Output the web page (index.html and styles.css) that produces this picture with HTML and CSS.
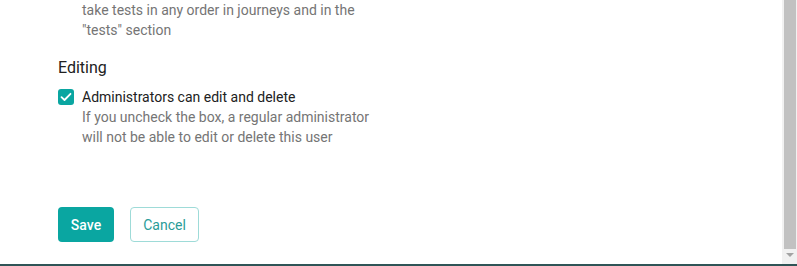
FILE: index.html
```html
<!DOCTYPE html>
<html lang="en">

<head>
    <meta charset="UTF-8">
    <meta name="viewport" content="width=device-width, initial-scale=1.0">

    <title>User settings</title>
    <link rel="stylesheet" href="styles.css">
</head>

<body>
    <main class="form">

        <div class="option">
            <p class="hint">take tests in any order in journeys and in the<br>"tests" section</p>
        </div>

        <section class="group">
            <h3 class="group-title">Editing</h3>

            <label class="check">
                <span class="box">
                    <svg width="12" height="10" viewBox="0 0 12 10">
                        <path d="M1.5 5.2 L4.5 8 L10.5 1.8" fill="none" stroke="#fff" stroke-width="1.8" stroke-linecap="round" stroke-linejoin="round" />
                    </svg>
                </span>
                <span class="check-text">
                    <span class="label">Administrators can edit and delete</span>
                    <span class="hint">If you uncheck the box, a regular administrator<br>will not be able to edit or delete this user</span>
                </span>
            </label>
        </section>

        <div class="actions">
            <button class="btn btn-save">Save</button>
            <button class="btn btn-cancel">Cancel</button>
        </div>

    </main>

    <div class="scrollbar">
        <div class="thumb"></div>
        <div class="arrow"></div>
    </div>

</body>

</html>
```

FILE: styles.css
```css
* {
    margin: 0;
    padding: 0;
    box-sizing: border-box;
}

body {
    height: 266px;
    overflow: hidden;
    background-color: white;
    font-family: Roboto, "Liberation Sans", sans-serif;
    font-size: 14px;
    line-height: 20px;
    border-bottom: 2px solid #2f5456;
}

.form {
    padding: 0 0 0 58px;
}

.option {
    padding-left: 24px;
}

.hint {
    display: block;
    color: #757575;
}

.group {
    margin-top: 16px;
}

.group-title {
    font-size: 16px;
    line-height: 24px;
    font-weight: 400;
    color: #212121;
    margin-bottom: 7px;
}

.check {
    display: flex;
    gap: 8px;
    cursor: pointer;
}

.check .box {
    width: 16px;
    height: 16px;
    margin-top: 2px;
    border-radius: 3px;
    background-color: #0aa6a1;
    display: flex;
    justify-content: center;
    align-items: center;
}

.check-text {
    display: flex;
    flex-direction: column;
}

.check .label {
    color: #212121;
}

.actions {
    display: flex;
    gap: 16px;
    margin-top: 60px;
}

.btn {
    height: 35px;
    border-radius: 4px;
    font-family: Roboto, "Liberation Sans", sans-serif;
    font-size: 14px;
    cursor: pointer;
}

.btn-save {
    width: 56px;
    border: none;
    color: white;
    font-weight: 500;
    background-color: #0aa6a1;
}

.btn-cancel {
    width: 69px;
    border: 1px solid #9edbd8;
    color: #2a9c98;
    background-color: white;
}

/* fake scrollbar */
.scrollbar {
    position: fixed;
    top: 0;
    right: 0;
    width: 15px;
    height: 264px;
    background-color: #f1f1f1;
}

.scrollbar .thumb {
    margin: 0 1px 0 2px;
    height: 249px;
    background-color: #c1c1c1;
}

.scrollbar .arrow {
    width: 0;
    height: 0;
    margin: 4px auto 0;
    border-left: 4px solid transparent;
    border-right: 4px solid transparent;
    border-top: 4px solid #a3a3a3;
}
```
